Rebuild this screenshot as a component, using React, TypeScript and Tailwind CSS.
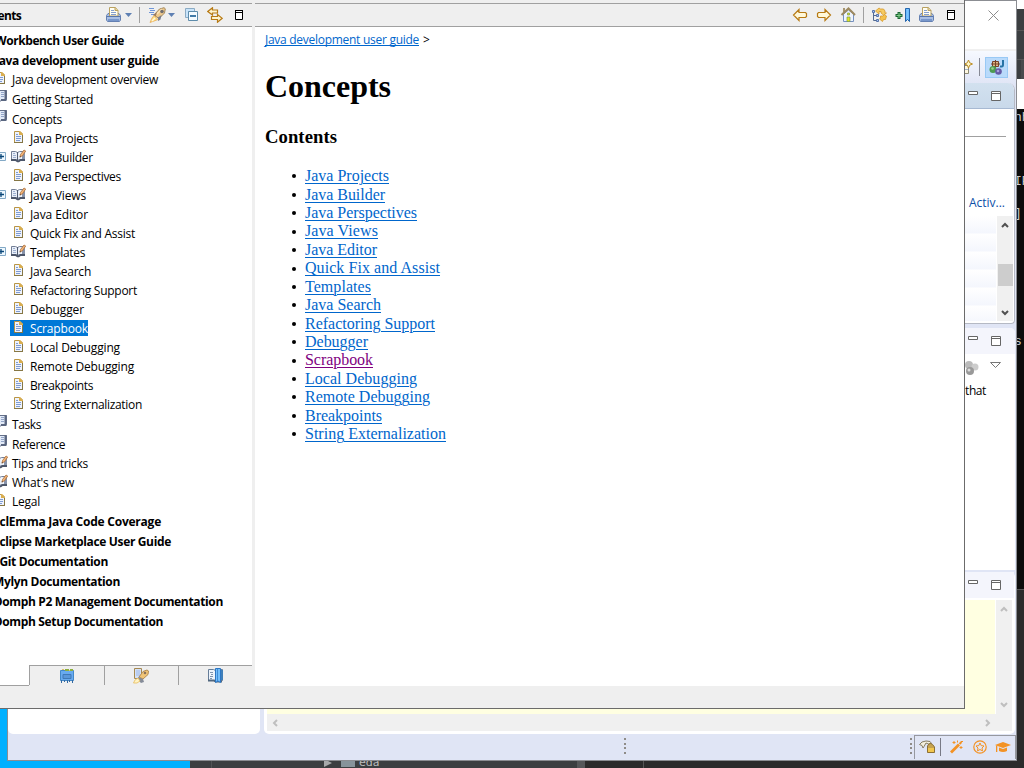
import { useLayoutEffect, useRef, useState, type ReactNode } from "react";

/* Text whose tracking is tuned so that the line takes a given width. */
function Fit({ w, children, className = "" }: { w: number; children: string; className?: string }) {
  const ref = useRef<HTMLSpanElement>(null);
  const [ls, setLs] = useState(0);
  useLayoutEffect(() => {
    if (ref.current) setLs((w - ref.current.getBoundingClientRect().width) / children.length);
  }, [w, children]);
  return (
    <span ref={ref} className={`inline-block whitespace-pre ${className}`} style={{ letterSpacing: ls }}>
      {children}
    </span>
  );
}

const Svg = ({ children, w = 16, h = 16, className = "" }: { children: ReactNode; w?: number; h?: number; className?: string }) => (
  <svg width={w} height={h} viewBox={`0 0 ${w} ${h}`} fill="none" className={`block shrink-0 ${className}`}>
    {children}
  </svg>
);

const Doc = () => (
  <Svg>
    <path d="M3.5 1.5H9L11.500 4v8.500h-8z" fill="#eef3fd" stroke="#b99545" />
    <path d="M3 12.500h9M11.500 12V5" stroke="#867745" />
    <path d="M8 1h1l3 3v1H8z" fill="#d9ae50" />
    <path d="M5 4.500h2M5 6.500h5M5 8.500h5M5 10.500h4" stroke="#7f9bd2" />
  </Svg>
);

const Book = ({ pen = false, closed = false }: { pen?: boolean; closed?: boolean }) => (
  <Svg>
    {closed ? (
      <>
        <path d="M1.500.500h13v9H10l-2 2-2-2H1.500z" fill="#e2eaf7" stroke="#66718a" />
        <path d="M13.500 0v10H9" stroke="#5a6680" strokeWidth="2" />
        <path d="M7.500 1v8" stroke="#8290ab" />
        <path d="M9 2.500h3M9 4.500h3M9 6.500h3" stroke="#93a5c8" />
      </>
    ) : (
      <>
        <path d="M1.500 2.500h4l2 1 2-1h5v8h-5l-2 1-2-1h-4z" fill="#e9eff9" stroke="#737f96" />
        <path d="M1 11h4.500l2 1.300h1.200l1.800-1.300H15" stroke="#4c566a" strokeWidth="1.800" />
        <path d="M7.500 3v9" stroke="#4f5a70" />
        <path d="M3 4.500h2M3 6.500h3M3 8.500h3" stroke="#9eb0d0" />
        <path d="M12 3h3v7h-3z" fill="#8793aa" />
        <path d="M9 4h3v5H9z" fill="#f4f7fc" />
      </>
    )}
    {pen && (
      <>
        <path d="m10 8 .5-2.500 3.500-4.500 1.700 1-3.200 4.700z" fill="#f4b579" stroke="#a96f3b" strokeWidth=".8" />
        <path d="m9.500 8.500 1.500-.500-1-1z" fill="#4b3a2c" />
      </>
    )}
  </Svg>
);

const Printer = () => (
  <Svg>
    <path d="M2 6.500h11l1.500 2V13l-1 1.500H1.500L.500 13V8.500z" fill="#a9bfe3" stroke="#6480b2" />
    <path d="M2 13h11" stroke="#7897cb" strokeWidth="2" />
    <path d="M3.500.500h6l2.500 3V9H3.500z" fill="#fffef3" stroke="#b9a160" />
    <path d="M9 .500v3h3" fill="#e8d69c" stroke="#b9a160" />
    <path d="M5 3.500h3M5 5.500h5M5 7.500h5" stroke="#849fce" />
    <path d="M1 9.500h13" stroke="#5876ac" />
  </Svg>
);

const Rocket = () => (
  <Svg w={18}>
    <path d="M0 1.500h5M1 3.500h5M0 5.500h5M2 7.500h3" stroke="#7096d8" />
    <path d="m5 8 5.500-6L15 .700l1.300 1.100L15.500 6 10 11.500z" fill="#efc98b" stroke="#a4895d" />
    <path d="m8 7 5-5" stroke="#fae4b9" strokeWidth="1.500" />
    <path d="M4 8 8 5 6.500 10z" fill="#9a7c62" />
    <path d="m9 10.500 3.500-2.500-1 4.500L9 14z" fill="#777d8e" />
    <path d="m5 8.500 4 4-3 1.200L1 15.500 3 11z" fill="#ffdc83" stroke="#e5a84c" strokeWidth=".7" />
    <path d="m3 14 3-3" stroke="#fffbe1" strokeWidth="1.500" />
    <circle cx="13" cy="4.500" r="1.800" fill="#6f6e70" />
  </Svg>
);

const Collapse = () => (
  <Svg>
    <path d="M1.500 10.500v-9h9v3h-6v6z" stroke="#8babc4" fill="#c9e4fa" />
    <path d="M4.500 4.500h9v9h-9z" fill="#f4fbff" stroke="#5e8cab" />
    <path d="M6 9h6" stroke="#145b92" strokeWidth="1.600" />
  </Svg>
);

const Sync = () => (
  <Svg>
    <path d="M5.500.800.800 4.500 5.500 8V6h5V3h-5zM10.500 7.500v2h-6v3h6v2.700l4.700-3.900z" fill="#fff5cf" stroke="#b77a14" strokeWidth="1.200" />
  </Svg>
);

const Arrow = ({ flip = false }: { flip?: boolean }) => (
  <Svg>
    <path d="M7 2.500v3h6.500l1 1v3l-1 1H7v3L1.500 8z" transform={flip ? "translate(16 0) scale(-1 1)" : ""} fill="#fff8d9" stroke="#b77a14" strokeWidth="1.200" />
  </Svg>
);

const Home = () => (
  <Svg>
    <path d="M3.500 7v7.500h10V7l-5-4z" fill="#eef4ff" stroke="#7590bf" />
    <path d="M3 1h2v4H3z" fill="#a69570" />
    <path d="M1.500 8 8.500 1.500 15 8" stroke="#9d8a60" strokeWidth="2" />
    <path d="M7.500 6h2v2h-2zM7 10h3v4.500H7z" fill="#e3e620" stroke="#7c9a4d" strokeWidth=".7" />
  </Svg>
);

const TreeSync = () => (
  <Svg>
    <path d="M2.500 4v9.500H7M2.500 8.500H7" stroke="#536a91" />
    <path d="M1.500 3.500h2v2h-2zM5.500 7.500h2v2h-2zM5.500 12.500h2v2h-2z" fill="#a9c5ef" stroke="#5874aa" />
    <path d="m4.500 4 3.500-3 1.500 1h3l1.500 2v2h1.500L12.500 8 10 6V4.500H8V7z" fill="#f6cb61" stroke="#d6992d" strokeWidth=".8" />
    <path d="m15.500 9-2-1.500L12 9H9.500v2l-1 1 3 2.500 1-2h2z" fill="#f5c14a" stroke="#d6992d" strokeWidth=".8" />
  </Svg>
);

const AddBookmark = () => (
  <Svg>
    <path d="M4 5v7M.5 8.500h7" stroke="#1c6634" strokeWidth="3" />
    <path d="M4 6v5M1.500 8.500h5" stroke="#81d187" />
    <path d="M10.500 1.500h4v13l-2-2-2 2z" fill="#5fb2f8" stroke="#2466ae" />
    <path d="M12.500 2v10" stroke="#7cc4ff" strokeWidth="2" />
  </Svg>
);

const Chip = () => (
  <Svg>
    <path d="M1.500 2.500h13v10h-13z" fill="#68aaf0" stroke="#4389c9" />
    <path d="M4 6.500h8v4H4z" fill="#5a97da" stroke="#3f79b8" />
    <path d="M2.500 12v3M5.500 12v2M8.500 12v3M10.500 12v2M13.500 12v3" stroke="#346aa2" />
    <path d="M6 1h4v2H6zM11 1h3v2h-3z" fill="#8daf3e" />
    <path d="M3 1.500h2M10 2.500h1" stroke="#ddc06b" />
  </Svg>
);

const RocketBook = () => (
  <Svg>
    <path d="M1.500.500h7v10h-7z" fill="#d4e1f8" stroke="#a78950" />
    <path d="M3 2h4v6H3z" fill="#b9cdf0" />
    <path d="m6 9 4-5.500L14 2l1.500 1-.500 3.500L10 11z" fill="#f0c578" stroke="#b48c52" />
    <path d="m5 9 5 2 1 3-3 1-3-3z" fill="#858c99" />
    <path d="M.500 15 2 12l3-2 2 3-3 2z" fill="#fff3c4" stroke="#e9bd5c" strokeWidth=".8" />
    <circle cx="12" cy="5" r="1.300" fill="#8b735c" />
  </Svg>
);

const BookmarkBook = () => (
  <Svg>
    <path d="M1.500 1.500h5l2 1 2-1h5v11h-5l-2 1-2-1h-5z" fill="#ecf3fb" stroke="#667d98" />
    <path d="M1 12.500h6l2 1h6" stroke="#50677f" strokeWidth="2" />
    <path d="M3 4.500h3M4 6.500h2M3 8.500h3M3 10.500h2" stroke="#7e94ae" />
    <path d="M8.500.500h5v14l-2.500-1.500-2.500 1.500z" fill="#70bdfb" stroke="#2b76c4" />
    <path d="M10.500 1v12" stroke="#3d8ad5" />
    <path d="M14 2h2v10h-2z" fill="#3f7fb9" />
  </Svg>
);

const Maximize = ({ soft = false }: { soft?: boolean }) =>
  soft ? (
    <Svg w={10} h={10}>
      <path d="M.500.500h9v9h-9zM1 2.500h8" stroke="#666" fill="#fff" />
    </Svg>
  ) : (
    <Svg w={8} h={10}>
      <path d="M.500.500h7v9h-7z" stroke="#000" fill="#fff" />
      <path d="M0 .500h8M0 2.500h8" stroke="#000" />
    </Svg>
  );

const Minimize = () => (
  <Svg w={10} h={4}>
    <path d="M.500.500h9v3h-9z" stroke="#666" fill="#fff" />
  </Svg>
);

const Drop = () => (
  <Svg w={7} h={4}>
    <path d="M0 0h7L3.500 4z" fill="#5e80b3" />
  </Svg>
);

const Chevron = ({ d, color }: { d: "up" | "down" | "left" | "right"; color: string }) => {
  const p = { up: "m1 6 3-3 3 3", down: "m1 2 3 3 3-3", left: "M6 1 3 4l3 3", right: "m2 1 3 3-3 3" }[d];
  return (
    <Svg w={8} h={8}>
      <path d={p} stroke={color} strokeWidth="2" />
    </Svg>
  );
};

type Kind = "bold" | "doc" | "closed" | "pen" | "subdoc" | "subpen";
const rows: [Kind, string, number][] = [
  ["bold", "Workbench User Guide", 129],
  ["bold", "Java development user guide", 164],
  ["doc", "Java development overview", 146],
  ["closed", "Getting Started", 81],
  ["closed", "Concepts", 50],
  ["subdoc", "Java Projects", 68],
  ["subpen", "Java Builder", 63],
  ["subdoc", "Java Perspectives", 91],
  ["subpen", "Java Views", 56],
  ["subdoc", "Java Editor", 58],
  ["subdoc", "Quick Fix and Assist", 105],
  ["subpen", "Templates", 55],
  ["subdoc", "Java Search", 61],
  ["subdoc", "Refactoring Support", 107],
  ["subdoc", "Debugger", 54],
  ["subdoc", "Scrapbook", 58],
  ["subdoc", "Local Debugging", 90],
  ["subdoc", "Remote Debugging", 104],
  ["subdoc", "Breakpoints", 63],
  ["subdoc", "String Externalization", 112],
  ["closed", "Tasks", 29],
  ["closed", "Reference", 53],
  ["pen", "Tips and tricks", 76],
  ["pen", "What's new", 62],
  ["doc", "Legal", 28],
  ["bold", "EclEmma Java Code Coverage", 168],
  ["bold", "Eclipse Marketplace User Guide", 178],
  ["bold", "EGit Documentation", 115],
  ["bold", "Mylyn Documentation", 127],
  ["bold", "Oomph P2 Management Documentation", 230],
  ["bold", "Oomph Setup Documentation", 170],
];

function TreeRow({ kind, text, w }: { kind: Kind; text: string; w: number }) {
  if (kind === "bold")
    return (
      <div className={`h-5 leading-5 font-bold ${/^[EMO]/.test(text) ? "-ml-[7px]" : "-ml-[5px]"}`}>
        <Fit w={w}>{text}</Fit>
      </div>
    );
  const sub = kind.startsWith("sub");
  const selected = text === "Scrapbook";
  return (
    <div className={`flex ${kind === "closed" ? "h-5 leading-5" : "h-[19px] leading-[18px]"}`}>
      {sub ? (
        <div className="w-[10px] shrink-0 pt-[3px]">
          {kind === "subpen" && (
            <Svg w={10} h={9} className="-ml-[4px]">
              <path d="M.500.500h9v8h-9z" fill="#eef8ff" stroke="#83a9c6" />
              <path d="M2 4.500h6M5 2v5" stroke="#0a4779" strokeWidth="1.300" />
            </Svg>
          )}
        </div>
      ) : (
        <div className="-ml-[8px] shrink-0" />
      )}
      <div className={`flex ${selected ? "h-4 bg-[#0078d7] leading-[18px] text-white" : ""}`}>
        <div className={`w-5 shrink-0 ${kind === "subdoc" || kind === "doc" ? "pl-[1px]" : ""}`}>
          {kind === "doc" || kind === "subdoc" ? <Doc /> : <Book pen={kind !== "closed"} closed={kind === "closed"} />}
        </div>
        <Fit w={w}>{text}</Fit>
      </div>
    </div>
  );
}

const links: [string, number][] = [
  ["Java Projects", 84],
  ["Java Builder", 80],
  ["Java Perspectives", 112],
  ["Java Views", 73],
  ["Java Editor", 72],
  ["Quick Fix and Assist", 135],
  ["Templates", 66],
  ["Java Search", 76],
  ["Refactoring Support", 130],
  ["Debugger", 63],
  ["Scrapbook", 68],
  ["Local Debugging", 112],
  ["Remote Debugging", 125],
  ["Breakpoints", 77],
  ["String Externalization", 141],
];

function HelpWindow() {
  return (
    <div className="absolute top-0 left-0 flex h-[709px] w-[965px] flex-col border-r border-b border-[#6b6b6b] bg-[#efefef]">
      <div className="flex h-[686px]">
        <div className="flex w-[252px] flex-col overflow-hidden">
          <div className="mt-[3px] flex h-6 shrink-0 items-center border-y border-[#a0a0a0] pb-px">
            <div className="-ml-[28px] w-[134px] shrink-0 pt-[2px] font-bold">
              <Fit w={49}>Contents</Fit>
            </div>
            <Printer />
            <div className="ml-[3px]"><Drop /></div>
            <div className="ml-[7px] h-4 w-px bg-[#a0a0a0]" />
            <div className="ml-[9px]"><Rocket /></div>
            <div className="ml-px"><Drop /></div>
            <div className="ml-[9px]"><Collapse /></div>
            <div className="ml-[7px]"><Sync /></div>
            <div className="ml-[12px]"><Maximize /></div>
          </div>
          <div className="h-[638px] shrink-0 overflow-hidden bg-white pt-[4px]">
            {rows.map(([k, t, w]) => (
              <TreeRow key={t} kind={k} text={t} w={w} />
            ))}
          </div>
          <div className="flex h-[21px] shrink-0">
            <div className="h-[21px] w-[29px] border-b border-[#a0a0a0] bg-white" />
            <div className="flex h-5 w-[75px] justify-center border-t border-l border-[#a0a0a0] pt-[2px]"><Chip /></div>
            <div className="flex h-5 w-[74px] justify-center border-t border-l border-[#a0a0a0] pt-[2px] pr-[2px]"><RocketBook /></div>
            <div className="flex h-5 w-[74px] justify-center border-t border-l border-[#a0a0a0] pt-[2px] pr-[2px]"><BookmarkBook /></div>
          </div>
        </div>
        <div className="ml-[3px] flex w-[709px] flex-col bg-white">
          <div className="flex h-[27px] shrink-0 flex-col bg-[#efefef] pt-[3px]">
            <div className="flex h-6 items-center justify-end border-y border-[#a0a0a0] pr-[9px] pb-px">
              <Arrow />
              <div className="ml-[8px]"><Arrow flip /></div>
              <div className="ml-[8px]"><Home /></div>
              <div className="ml-[7px] h-4 w-px bg-[#a0a0a0]" />
              <div className="ml-[7px]"><TreeSync /></div>
              <div className="ml-[8px]"><AddBookmark /></div>
              <div className="ml-[8px]"><Printer /></div>
              <div className="ml-[12px]"><Maximize /></div>
            </div>
          </div>
          <div className="pl-[10px]">
            <div className="mt-[4px] flex h-[18px] leading-[18px]">
              <Fit w={154} className="h-[15px] border-b border-[#0066cc] text-[#0066cc]">Java development user guide</Fit>
              <span className="ml-[4px]">&gt;</span>
            </div>
            <h1 className="mt-[19px] h-9 font-['Liberation_Serif',serif] text-[32px] leading-9 font-bold">
              <Fit w={126}>Concepts</Fit>
            </h1>
            <h3 className="mt-[22px] h-[22px] font-['Liberation_Serif',serif] text-[18.7px] leading-[22px] font-bold">
              <Fit w={72}>Contents</Fit>
            </h3>
            <ul className="mt-[19.2px] font-['Liberation_Serif',serif] text-[16px] leading-[18.43px]">
              {links.map(([t, w]) => (
                <li key={t} className="flex h-[18.43px] items-center pl-[27px]">
                  <span className="mr-[9px] size-1 rounded-full bg-black" />
                  <Fit w={w} className={`underline decoration-1 underline-offset-2 ${t === "Scrapbook" ? "text-[#800080]" : "text-[#0066cc]"}`}>{t}</Fit>
                </li>
              ))}
            </ul>
          </div>
        </div>
      </div>
    </div>
  );
}

const PanelButtons = () => (
  <div className="flex items-start gap-[13px] pr-[13px]">
    <Minimize />
    <Maximize soft />
  </div>
);

const Grip = () => (
  <Svg w={2} h={16}>
    <path d="M1 0v2M1 5v2M1 9v2M1 14v2" stroke="#8f8c88" strokeWidth="2" />
  </Svg>
);

function IdeWindow() {
  return (
    <div className="absolute top-0 left-[7px] flex h-[761px] w-[1010px] flex-col border border-[#8b8d92] bg-[#e0e5f5]">
      <div className="flex h-[48px] shrink-0 justify-end bg-white pt-[9px] pr-[17px]">
        <Svg w={11} h={11}>
          <path d="m.500.500 10 10M10.500.500l-10 10" stroke="#8c8c8c" />
        </Svg>
      </div>
      <div className="flex h-[34px] shrink-0 items-center justify-end border-t-2 border-[#f0f0f0] bg-linear-to-b from-[#f6f9ff] to-[#e1e6f6] pr-[8px]">
        <Svg className="mr-[6px]">
          <path d="M2.500 6.500h9v8h-9z" fill="#fff8e0" stroke="#8f8b75" />
          <path d="M3 10.500h8" stroke="#a4b6cf" />
          <path d="m11.500 1 1.200 2.800 2.800 1.200-2.800 1.200L11.500 9l-1.200-2.800L7.500 5l2.800-1.200z" fill="#fff8cb" stroke="#bb8c22" />
        </Svg>
        <div className="mr-[5px] h-[18px] w-px bg-[#868995]" />
        <div className="flex h-[21px] w-[23px] items-center justify-center border border-[#99c9f5] bg-[#b9dafb]">
          <Svg>
            <path d="M3.500 2.500h6v5h-6zM6.500 1v8M2 5h9" fill="#e1b986" stroke="#774229" />
            <path d="M14 1v5q0 2-3 1.500" stroke="#2672a5" strokeWidth="2" />
            <circle cx="4" cy="10.500" r="3.500" fill="#4d9c52" />
            <circle cx="3.500" cy="9.500" r="1.300" fill="#99d18f" />
            <circle cx="9.500" cy="12.500" r="3.300" fill="#655aa5" />
            <circle cx="9" cy="12" r="1.300" fill="#aaa0dd" />
          </Svg>
        </div>
      </div>
      <div className="flex h-[651px] shrink-0">
        <div className="w-[252px] rounded-b-[5px] bg-white" />
        <div className="ml-[4px] flex w-[751px] flex-col text-[12px]">
          <div className="flex h-[241px] shrink-0 flex-col overflow-hidden rounded-tr-[7px] rounded-br-[4px] border-r border-b border-[#b5b9c4] bg-white">
            <div className="flex h-[26px] shrink-0 justify-end border-b border-[#a7b9d2] bg-linear-to-b from-[#d2e1ef] to-[#c9d9ea] pt-[8px]"><PanelButtons /></div>
            <div className="mr-[8px] h-[28px] shrink-0 border-b border-[#a0a0a0]" />
            <div className="h-[79px] shrink-0 pt-[58px] pr-[9px] text-right leading-4 text-[#0c50a8]"><Fit w={36}>Activ...</Fit></div>
            <div className="flex h-[105px] justify-end pr-px">
              <div className="w-[50px] bg-[repeating-linear-gradient(to_bottom,#ffffff_0px,#f4f6fd_17px,#ffffff_18px)]" />
              <div className="ml-px flex w-[16px] flex-col items-center bg-[#f0f0f0] pt-[5px]">
                <Chevron d="up" color="#505050" />
                <div className="mt-[35px] h-[22px] w-[15px] bg-[#cdcdcd]" />
                <div className="mt-[23px]"><Chevron d="down" color="#505050" /></div>
              </div>
            </div>
          </div>
          <div className="mt-[4px] h-[242px] shrink-0 overflow-hidden rounded-tr-[5px] bg-white">
            <div className="flex h-[26px] justify-end bg-[#f4f5fc] pt-[8px] pr-px"><PanelButtons /></div>
            <div className="flex justify-end pt-[7px] pr-[14px]">
              <Svg>
                <circle cx="4" cy="4" r="4" fill="#bbb" />
                <circle cx="10" cy="6" r="3.500" fill="#ccc" />
                <circle cx="5" cy="10" r="4" fill="#999" />
                <circle cx="4" cy="9" r="1.500" fill="#ddd" />
              </Svg>
              <Svg w={11} h={7} className="mt-px ml-[9px]">
                <path d="M.500.500h10L5.500 5.500z" fill="#fff" stroke="#777" />
              </Svg>
            </div>
            <div className="pt-[5px] pl-[701px] leading-[18px]"><Fit w={21}>that</Fit></div>
          </div>
          <div className="mt-[2px] flex h-[162px] shrink-0 flex-col rounded-tr-[5px] rounded-b-[5px] bg-white pr-[3px] pl-[3px]">
            <div className="-mr-[2px] flex h-[26px] shrink-0 justify-end bg-[#f4f5fc] pt-[8px]"><PanelButtons /></div>
            <div className="mt-[2px] flex h-[114px] shrink-0">
              <div className="w-[729px] bg-[#ffffe1]" />
              <div className="ml-px flex w-[16px] flex-col items-center justify-between bg-[#f0f0f0] py-[5px]">
                <Chevron d="up" color="#bfbfbf" />
                <Chevron d="down" color="#bfbfbf" />
              </div>
            </div>
            <div className="flex h-[17px] items-center justify-between bg-[#f0f0f0] pr-[20px] pl-[4px]">
              <Chevron d="left" color="#bfbfbf" />
              <Chevron d="right" color="#bfbfbf" />
            </div>
          </div>
        </div>
      </div>
      <div className="flex h-[25px] items-end">
        <div className="mb-[5px] ml-[616px]"><Grip /></div>
        <div className="mb-[5px] ml-[284px]"><Grip /></div>
        <div className="ml-[2px] flex h-6 w-[102px] items-center border-t border-r border-l border-[#96989f] pb-px pl-[4px]">
          <Svg>
            <path d="M.500 5.500 3 3l4-1 4 .500 1.500 2-3 .500-2.500-1L5 7.500 4 9 3 6.500z" fill="#f4f0df" stroke="#857c62" />
            <path d="M8.500 13.500V7q1-2.500 3-2.500T15.500 8v5.500z" fill="#c5a24f" stroke="#8d7033" />
            <path d="M9 9h6v4H9z" fill="#f1c64e" />
          </Svg>
          <div className="ml-[5px] h-[18px] w-px bg-[#777985]" />
          <Svg className="ml-[7px]">
            <path d="m3 13.500 8-8" stroke="#f39224" strokeWidth="2.800" />
            <path d="m11.500 5 2-2" stroke="#f39224" strokeWidth="2" />
            <path d="M6 2v3M4.500 3.500h3M9.500 1.500v2M13 7v3M11.500 8.500h3M13 2.500h2" stroke="#f39224" />
          </Svg>
          <Svg className="ml-[8px]">
            <circle cx="8" cy="8" r="6.200" stroke="#f39224" strokeWidth="1.200" />
            <path d="m8 4 1.200 2.600 2.800.400-2 2 .500 2.900L8 10.500l-2.500 1.400L6 9 4 7l2.800-.400z" stroke="#f39224" />
          </Svg>
          <Svg className="ml-[7px]">
            <path d="m0 6 8-3 8 3-8 3z" fill="#f39224" />
            <path d="M4 8.500v3.500q4 2 8 0V8.500L8 10zM1 6.500h1.300V13H1z" fill="#f39224" />
          </Svg>
        </div>
      </div>
    </div>
  );
}

function Desktop() {
  return (
    <div className="flex h-[768px]">
      <div className="w-[190px] bg-[#00b0ff]" />
      <div className="flex flex-1 items-end bg-[#3c3f41]">
        <div className="ml-[21px] flex h-[8px] flex-1 items-start overflow-hidden border-l border-[#515355]">
          <Svg w={8} h={8} className="ml-[112px]"><path d="M0-1v8l8-4z" fill="#a7a9aa" /></Svg>
          <div className="ml-[9px] h-[7px] w-[14px] bg-[#87939a]" />
          <span className="-mt-[4px] ml-[4px] font-['DejaVu_Sans',sans-serif] text-[11px] leading-[14px] text-[#bdbdbd]">eda</span>
        </div>
        <div className="h-[8px] w-[8px] bg-[#555759]" />
        <div className="h-[8px] w-[59px] border-r border-[#555] bg-[#2b2b2b]" />
        <div className="h-[8px] w-[372px] bg-[#2b2b2b]" />
      </div>
      <div className="flex w-[8px] flex-col overflow-hidden font-['Liberation_Mono',monospace] text-[13px] text-[#cccccc]">
        <div className="h-[9px] bg-white" />
        <div className="h-[22px] border-b border-[#555] bg-[#3c3f41]" />
        <div className="h-[29px] border-b border-[#555] bg-[#3c3f41]" />
        <div className="h-[19px] border-l-[5px] border-[#3c3f41] bg-[#484b4d]" />
        <div className="h-[30px] bg-white" />
        <div className="h-[480px] bg-[#0c0c0c] leading-4 whitespace-pre">
          <div className="-ml-[2px] pt-px">nh</div>
          <div className="mt-[48px] -ml-[2px]">IP</div>
          <div className="mt-[16px] -ml-[2px]">]</div>
          <div className="mt-[112px] -ml-[2px]">s</div>
        </div>
        <div className="flex-1 border-t border-[#555] bg-[#2b2b2b]" />
      </div>
    </div>
  );
}

export default function App() {
  return (
    <div className="relative h-[768px] w-[1024px] overflow-hidden bg-[#2b2b2b] font-['Open_Sans','Noto_Sans',sans-serif] text-[12px] text-black">
      <Desktop />
      <IdeWindow />
      <HelpWindow />
    </div>
  );
}
